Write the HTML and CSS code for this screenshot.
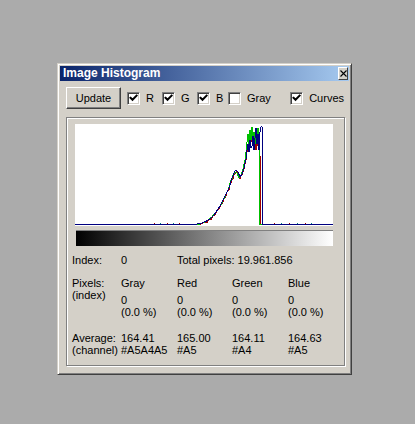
FILE: index.html
```html
<!DOCTYPE html>
<html lang="en">

<head>
  <meta charset="utf-8">
  <title>Image Histogram</title>
  <link rel="stylesheet" href="styles.css">
</head>

<body>
  <div class="window">
    <div class="titlebar">
      <span class="title">Image Histogram</span>
      <span class="close">
        <svg width="7" height="7" viewBox="0 0 7 7"><path d="M0.5 0.5 L6.5 6.5 M6.5 0.5 L0.5 6.5" stroke="#000" stroke-width="1.1" fill="none"/></svg>
      </span>
    </div>

    <div class="content">
      <div class="toolbar">
        <button class="btn">Update</button>
        <label class="check">
          <span class="box"><svg width="9" height="9" viewBox="0 0 9 9"><path d="M1.5 3.8 L3.5 5.8 L7.6 1.6" stroke="#000" stroke-width="2" fill="none" stroke-linecap="square"/></svg></span>R
        </label>
        <label class="check">
          <span class="box"><svg width="9" height="9" viewBox="0 0 9 9"><path d="M1.5 3.8 L3.5 5.8 L7.6 1.6" stroke="#000" stroke-width="2" fill="none" stroke-linecap="square"/></svg></span>G
        </label>
        <label class="check check-b">
          <span class="box"><svg width="9" height="9" viewBox="0 0 9 9"><path d="M1.5 3.8 L3.5 5.8 L7.6 1.6" stroke="#000" stroke-width="2" fill="none" stroke-linecap="square"/></svg></span>B
        </label>
        <label class="check check-gray">
          <span class="box"></span>Gray
        </label>
        <label class="check check-curves">
          <span class="box"><svg width="9" height="9" viewBox="0 0 9 9"><path d="M1.5 3.8 L3.5 5.8 L7.6 1.6" stroke="#000" stroke-width="2" fill="none" stroke-linecap="square"/></svg></span>Curves
        </label>
      </div>

      <div class="group">
        <div class="plot">
          <svg width="258" height="102" viewBox="0 0 258 102" shape-rendering="crispEdges">
            <!-- red channel -->
            <polyline fill="none" stroke="#a00000" stroke-width="1"
              points="0,100.5 122,100.5 126,100 130,98 132,98.5 134,96 136,95.5 138,92 140,91 142,87 144,85 146,81 148,78 149,75 151,72 152,68 154,66 155,61 157,56 158,55 159,51 161,48 162,47 163,50 165,55 166,52 167,51 169,45 171,36 172,28 173,22 174,14 175,20 176,10 177,18 178,8 179,22 180,16 181,26 182,18 183,22 184,14 185,30 186,100.5 258,100.5"/>
            <!-- green channel -->
            <polyline fill="none" stroke="#00c000" stroke-width="1"
              points="0,100.5 120,100.5 125,100 127,99 129,98.5 131,97 133,96 135,94 137,93 139,90 141,88 143,85 145,82 147,79 148,76 150,73 151,70 153,66 154,63 156,56 157,55 158,51 160,48 162,49 164,54 166,51 168,45 170,36 171,28 172,18 173,10 174,22 175,6 176,16 177,3 178,14 179,8 180,20 181,5 182,12 183,4 184,10 185,100.5 258,100.5"/>
            <!-- blue channel -->
            <polyline fill="none" stroke="#000080" stroke-width="1"
              points="0,100.5 118,100.5 122,100 125,99.5 127,99 129,98 131,97.5 133,96 135,95 137,93 139,91 141,88 143,85 145,82 146,80 148,76 149,74 151,70 152,68 154,64 155,61 156,57 157,54 158,52 159,49 160,47 161,46 163,48 165,53 167,50 169,44 171,35 172,26 173,20 174,28 175,16 176,24 177,22 178,12 179,26 180,14 181,4 182,20 183,10 184,26 185,8 186,3 187,2 188,100.5 258,100.5"/>
            <!-- baseline specks -->
            <path fill="none" stroke="#a00000" d="M79 99 v1 M92 99 v1 M104 99 v1 M199 99 v1 M214 99 v1 M230 99 v1"/>
            <path fill="none" stroke="#008080" d="M85 99 v1 M98 99 v1 M206 99 v1 M222 99 v1 M236 99 v1"/>
          </svg>
        </div>
        <div class="gradient"></div>

        <div class="stats">
          <div>Index:</div>
          <div>0</div>
          <div class="wide">Total pixels: 19.961.856</div>

          <div class="row-gap">Pixels:<br>(index)</div>
          <div class="row-gap">Gray<div class="count">0<br>(0.0 %)</div></div>
          <div class="row-gap">Red<div class="count">0<br>(0.0 %)</div></div>
          <div class="row-gap">Green<div class="count">0<br>(0.0 %)</div></div>
          <div class="row-gap">Blue<div class="count">0<br>(0.0 %)</div></div>

          <div class="row-avg">Average:<br>(channel)</div>
          <div class="row-avg">164.41<br>#A5A4A5</div>
          <div class="row-avg">165.00<br>#A5</div>
          <div class="row-avg">164.11<br>#A4</div>
          <div class="row-avg">164.63<br>#A5</div>
        </div>
      </div>
    </div>
  </div>
</body>

</html>
```

FILE: styles.css
```css
body {
  margin: 0;
  background-color: #ababab;
  font-family: "Liberation Sans", Arial, sans-serif;
  font-size: 11px;
  color: #000;
}
.window {
  box-sizing: border-box;
  width: 295px;
  height: 312px;
  margin: 63px 0 0 57px;
  padding: 2px;
  background-color: #d4d0c8;
  border: 1px solid;
  border-color: #d4d0c8 #404040 #404040 #d4d0c8;
  box-shadow: inset 1px 1px #fff, inset -1px -1px #808080;
}
.titlebar {
  display: flex;
  align-items: center;
  height: 15px;
  padding: 0 1px 0 3px;
  background: linear-gradient(to right, #0a246a, #a6caf0);
}
.title {
  flex: 1;
  color: #fff;
  font-weight: bold;
  font-size: 12px;
  line-height: 15px;
}
.close {
  box-sizing: border-box;
  display: flex;
  align-items: center;
  justify-content: center;
  width: 10px;
  height: 13px;
  background-color: #d4d0c8;
  border: 1px solid;
  border-color: #fff #404040 #404040 #fff;
}
.content {
  padding: 0 4px 0 6px;
}
.toolbar {
  display: flex;
  align-items: center;
  height: 22px;
  margin-top: 6px;
}
.btn {
  box-sizing: border-box;
  width: 55px;
  height: 22px;
  margin-right: 6px;
  padding: 0;
  font-family: "Liberation Sans", Arial, sans-serif;
  font-size: 11px;
  color: #000;
  background-color: #d4d0c8;
  border: 1px solid;
  border-color: #fff #404040 #404040 #fff;
  box-shadow: inset -1px -1px #808080;
}
.check {
  display: flex;
  align-items: center;
  width: 35px;
  line-height: 13px;
}
.check-b {
  width: 31px;
}
.check-gray {
  flex: 1;
}
.check-curves {
  width: auto;
  padding-right: 1px;
}
.box {
  box-sizing: border-box;
  display: flex;
  align-items: center;
  justify-content: center;
  width: 13px;
  height: 13px;
  margin-right: 6px;
  background-color: #fff;
  border: 1px solid;
  border-color: #808080 #fff #fff #808080;
  box-shadow: inset 1px 1px #404040, inset -1px -1px #d4d0c8;
}
.group {
  box-sizing: border-box;
  height: 249px;
  margin-top: 8px;
  padding: 6px 0 0 5px;
  border: 1px solid #808080;
  box-shadow: inset 1px 1px #fff, 1px 1px #fff;
}
.plot {
  width: 258px;
  height: 102px;
  margin-left: 3px;
  background-color: #fff;
}
.plot svg {
  display: block;
}
.gradient {
  box-sizing: border-box;
  width: 257px;
  height: 16px;
  margin: 4px 0 0 4px;
  background: linear-gradient(to right, #000, #fff);
  border-top: 1px solid #808080;
}
.stats {
  display: grid;
  grid-template-columns: 49px 56px 55px 56px 56px;
  margin-top: 8px;
  line-height: 12px;
  white-space: nowrap;
}
.wide {
  grid-column: span 3;
}
.row-gap {
  margin-top: 11px;
}
.count {
  margin-top: 5px;
}
.row-avg {
  margin-top: 14px;
}
```
